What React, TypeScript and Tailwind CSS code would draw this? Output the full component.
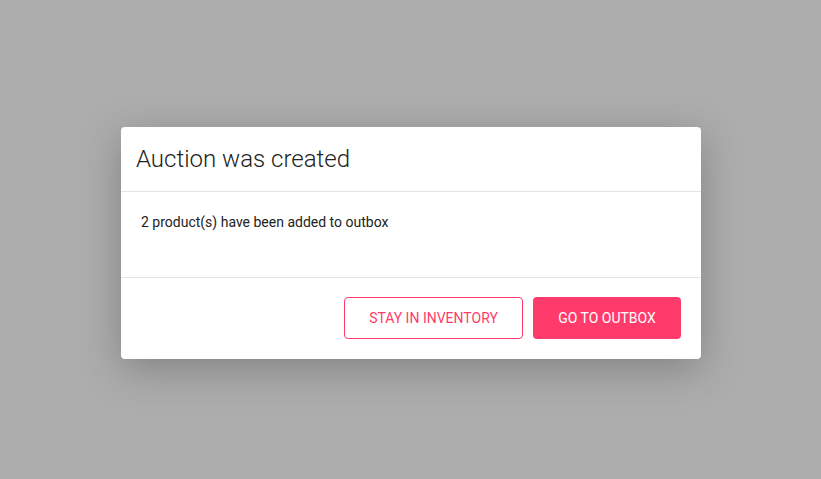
export default function App() {
  return (
    <div className="flex h-[479px] w-[821px] items-start bg-[#adadad] pl-[121px] pt-[127px] font-['Roboto',sans-serif]">
      <div className="w-[580px] rounded-[4px] bg-white shadow-[0_10px_40px_rgba(0,0,0,0.25)]">
        <div className="flex h-[65px] items-center border-b border-[#e3e3e3] px-[15px]">
          <h1 className="text-[24px] font-light text-[#222]">Auction was created</h1>
        </div>
        <div className="h-[86px] border-b border-[#e3e3e3] px-[20px] pt-[20px]">
          <p className="text-[14px] leading-[20px] text-[#222]">2 product(s) have been added to outbox</p>
        </div>
        <div className="flex justify-end gap-[10px] px-[20px] pb-[20px] pt-[19px]">
          <button className="h-[42px] w-[179px] rounded-[4px] border border-[#ff3b6b] text-[14px] uppercase text-[#ff3b6b]">
            Stay in inventory
          </button>
          <button className="h-[42px] w-[148px] rounded-[4px] bg-[#ff3b6b] text-[14px] uppercase text-white">
            Go to outbox
          </button>
        </div>
      </div>
    </div>
  )
}
